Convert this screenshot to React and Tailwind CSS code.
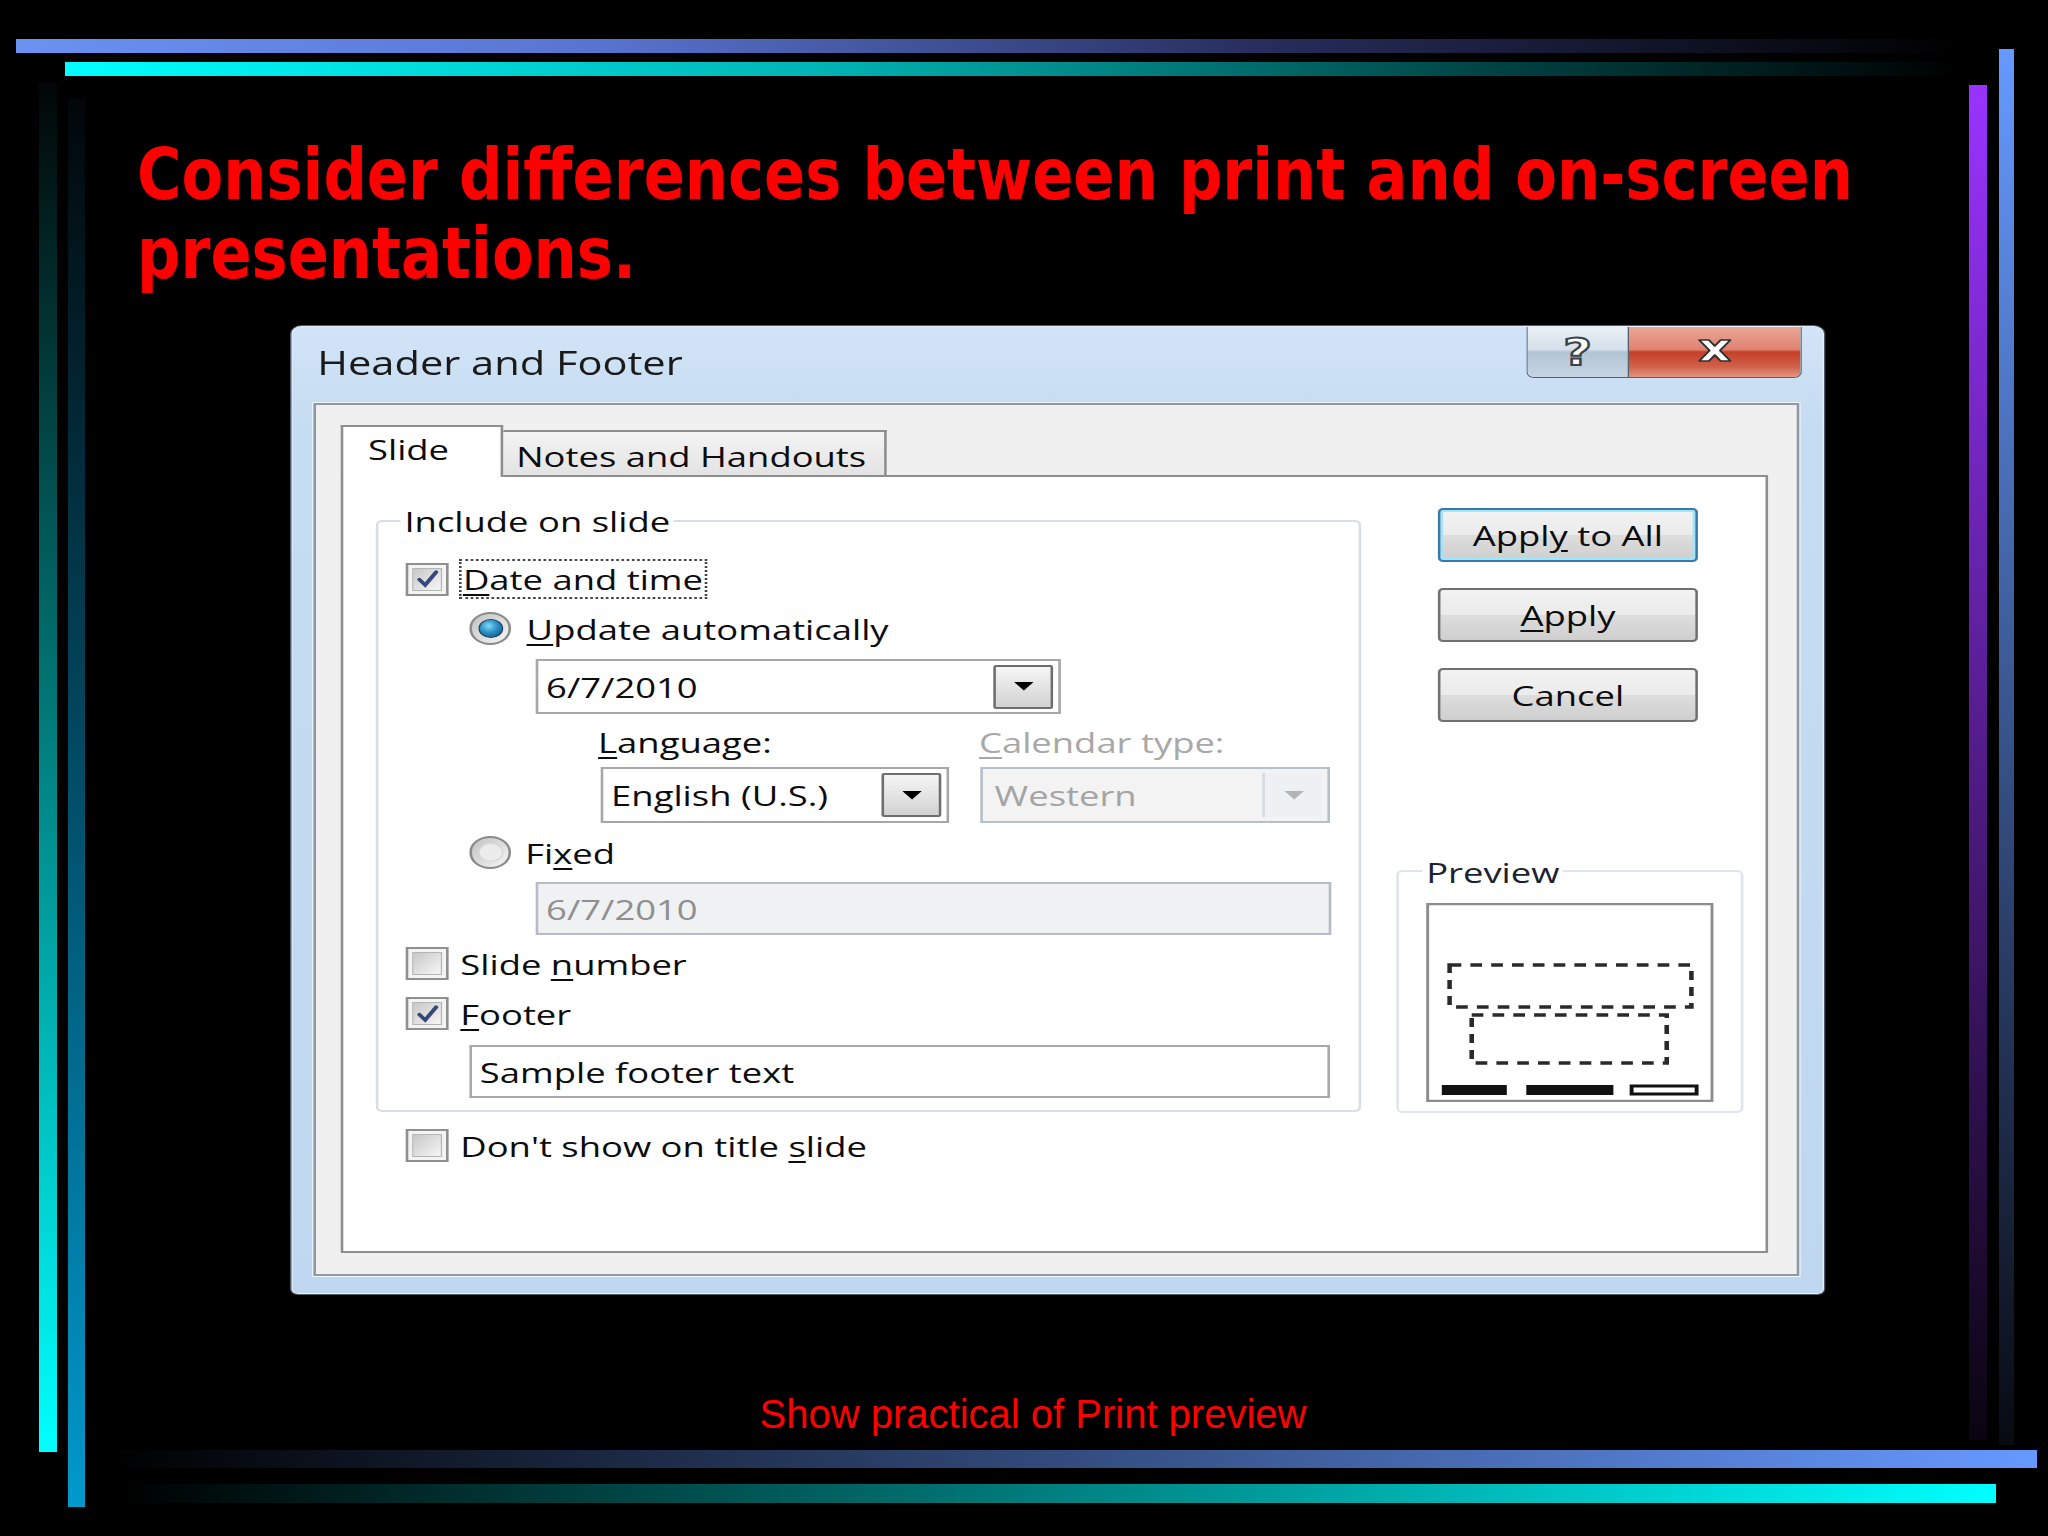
import React from 'react';

const ui = "font-['Open_Sans',sans-serif] text-[28px] leading-[34px]";

function Decor() {
  // slide template ornament: gradient strips round the edges
  return (
    <svg className="pointer-events-none absolute inset-0" width="2048" height="1536">
      <defs>
        <linearGradient id="top1" x1="0" y1="0" x2="1" y2="0">
          <stop offset="0" stopColor="#6a92f2" />
          <stop offset="0.3" stopColor="#5874d0" />
          <stop offset="0.65" stopColor="#262c5a" />
          <stop offset="1" stopColor="#000" />
        </linearGradient>
        <linearGradient id="top2" x1="0" y1="0" x2="1" y2="0">
          <stop offset="0" stopColor="#00ffff" />
          <stop offset="0.4" stopColor="#00b4b4" />
          <stop offset="0.75" stopColor="#004444" />
          <stop offset="1" stopColor="#000" />
        </linearGradient>
        <linearGradient id="rPurple" x1="0" y1="0" x2="0" y2="1">
          <stop offset="0" stopColor="#9933ff" />
          <stop offset="1" stopColor="#0a0410" />
        </linearGradient>
        <linearGradient id="rBlue" x1="0" y1="0" x2="0" y2="1">
          <stop offset="0" stopColor="#6699ff" />
          <stop offset="1" stopColor="#080a12" />
        </linearGradient>
        <linearGradient id="lCyan" x1="0" y1="0" x2="0" y2="1">
          <stop offset="0" stopColor="#020606" />
          <stop offset="1" stopColor="#00ffff" />
        </linearGradient>
        <linearGradient id="lBlue" x1="0" y1="0" x2="0" y2="1">
          <stop offset="0" stopColor="#020608" />
          <stop offset="1" stopColor="#0099cc" />
        </linearGradient>
        <linearGradient id="bBlue" x1="0" y1="0" x2="1" y2="0">
          <stop offset="0" stopColor="#000" />
          <stop offset="1" stopColor="#6699ff" />
        </linearGradient>
        <linearGradient id="bCyan" x1="0" y1="0" x2="1" y2="0">
          <stop offset="0" stopColor="#000" />
          <stop offset="1" stopColor="#00ffff" />
        </linearGradient>
      </defs>
      <rect x="16" y="39" width="1944" height="14" fill="url(#top1)" />
      <rect x="65" y="62" width="1895" height="14" fill="url(#top2)" />
      <rect x="1969" y="85" width="18" height="1355" fill="url(#rPurple)" />
      <rect x="1999" y="49" width="15" height="1396" fill="url(#rBlue)" />
      <rect x="39" y="83" width="18" height="1369" fill="url(#lCyan)" />
      <rect x="68" y="98" width="17" height="1409" fill="url(#lBlue)" />
      <rect x="111" y="1450" width="1926" height="18" fill="url(#bBlue)" />
      <rect x="118" y="1484" width="1878" height="19" fill="url(#bCyan)" />
    </svg>
  );
}

function Check({ checked }) {
  return (
    <div className="flex h-[33px] w-[33px] shrink-0 items-center justify-center border-2 border-[#8e8f8f] bg-[#f4f4f4] p-[3px]">
      <div className="flex h-full w-full items-center justify-center border border-[#b5b5b5] bg-linear-to-br from-[#c8c8c8] to-[#f6f6f6]">
        {checked && (
          <svg width="20" height="20" viewBox="0 0 20 20">
            <path d="M3.5 10.5 L8 16 L16.5 3" fill="none" stroke="#34497a" strokeWidth="3.2" strokeLinecap="round" />
          </svg>
        )}
      </div>
    </div>
  );
}

function Radio({ checked }) {
  return (
    <div className="flex h-[33px] w-[32px] shrink-0 items-center justify-center rounded-full border-2 border-[#8b8b8b] bg-linear-to-br from-[#c2c2c2] to-[#f6f6f6]">
      {checked ? (
        <div className="h-[19px] w-[19px] rounded-full border border-[#1e3f5a] bg-[radial-gradient(circle_at_40%_35%,#7fd8f8,#2a8fc6_45%,#0f4a75)]" />
      ) : (
        <div className="h-[19px] w-[19px] rounded-full border border-[#d6d6d6] bg-[#ececec]" />
      )}
    </div>
  );
}

function DropBtn({ disabled }) {
  if (disabled) {
    return (
      <div className="mr-[4px] flex h-[44px] w-[46px] items-center justify-center border-l-2 border-[#d5dbe1] bg-[#eef1f4]">
        <svg width="15" height="9" viewBox="0 0 15 9">
          <path d="M0 0 H15 L7.5 8.5 Z" fill="#b4b4b4" />
        </svg>
      </div>
    );
  }
  return (
    <div className="mr-[4px] flex h-[44px] w-[46px] items-center justify-center rounded-[2px] border-2 border-[#6e6e6e] bg-linear-to-b from-[#f6f6f6] to-[#d2d2d2]">
      <svg width="15" height="9" viewBox="0 0 15 9">
        <path d="M0 0 H15 L7.5 8.5 Z" fill="#000" />
      </svg>
    </div>
  );
}

function Button({ children, isDefault }) {
  return (
    <div
      className={
        isDefault
          ? 'flex h-[54px] w-[200px] items-center justify-center rounded-[4px] border-2 border-[#3a78a8] bg-[linear-gradient(to_bottom,#f2f2f2,#ebebeb_50%,#dddddd_51%,#cfcfcf)] shadow-[inset_0_0_0_2px_#9fe6fa]'
          : 'flex h-[54px] w-[200px] items-center justify-center rounded-[4px] border-2 border-[#707070] bg-[linear-gradient(to_bottom,#f2f2f2,#ebebeb_50%,#dddddd_51%,#cfcfcf)]'
      }
    >
      <span className="text-[#0c0c0c]">{children}</span>
    </div>
  );
}

function PreviewThumb() {
  return (
    <svg width="221" height="199" viewBox="0 0 221 199" className="ml-[21px] mt-[31px] block">
      <rect x="1" y="1" width="219" height="197" fill="#fff" stroke="#8c8c8c" strokeWidth="2.5" />
      <rect x="18" y="62" width="186" height="42" fill="none" stroke="#2a2a2a" strokeWidth="3.5" strokeDasharray="9 7" />
      <rect x="35" y="112" width="150" height="48" fill="none" stroke="#2a2a2a" strokeWidth="3.5" strokeDasharray="9 7" />
      <rect x="12" y="182" width="50" height="10" fill="#111" />
      <rect x="77" y="182" width="67" height="10" fill="#111" />
      <rect x="158" y="183" width="50" height="8" fill="#fff" stroke="#111" strokeWidth="3" />
    </svg>
  );
}

function TabStrip() {
  return (
    <div className="flex h-[50px] items-end">
      <div className="relative z-10 -mb-[2px] h-[52px] w-[125px] border-2 border-b-0 border-[#8e8e8e] bg-white pl-[19px] pt-[5px]">
        Slide
      </div>
      <div className="h-[45px] w-[295px] border-2 border-b-0 border-l-0 border-[#8e8e8e] bg-linear-to-b from-[#f4f4f4] to-[#e3e3e3] pl-[10px] pt-[7px]">
        Notes and Handouts
      </div>
    </div>
  );
}

function IncludeGroup() {
  return (
    <div className="relative rounded-[5px] border-2 border-[#d5dfe5] pb-[12px]">
      <span className="absolute -top-[18px] left-[17px] bg-white px-[3px]">Include on slide</span>

      <div className="ml-[21px] mt-[37px] flex h-[40px] items-center">
        <Check checked />
        <span className="ml-[8px] flex h-[40px] items-center border-2 border-dotted border-[#444] px-[1px]">
          <span>
            <u className="underline-offset-[4px]">D</u>ate and time
          </span>
        </span>
      </div>

      <div className="ml-[70px] mt-[13px] flex h-[33px] items-center">
        <Radio checked />
        <span className="ml-[12px]">
          <u className="underline-offset-[4px]">U</u>pdate automatically
        </span>
      </div>

      <div className="ml-[121px] mt-[14px] flex h-[55px] w-[404px] items-center border-2 border-[#a7a7a7] bg-white">
        <span className="flex-1 pl-[6px]">6/7/2010</span>
        <DropBtn />
      </div>

      <div className="ml-[169px] mt-[11px] flex h-[34px]">
        <span className="w-[293px]">
          <u className="underline-offset-[4px]">L</u>anguage:
        </span>
        <span className="text-[#a8a8a8]">
          <u className="underline-offset-[4px]">C</u>alendar type:
        </span>
      </div>

      <div className="ml-[171px] mt-[8px] flex gap-[24px]">
        <div className="flex h-[56px] w-[268px] items-center border-2 border-[#a7a7a7] bg-white">
          <span className="flex-1 pl-[6px]">English (U.S.)</span>
          <DropBtn />
        </div>
        <div className="flex h-[56px] w-[269px] items-center border-2 border-[#b6c0ca] bg-[#f3f3f3]">
          <span className="flex-1 pl-[9px] text-[#a4a4a4]">Western</span>
          <DropBtn disabled />
        </div>
      </div>

      <div className="ml-[70px] mt-[13px] flex h-[33px] items-center">
        <Radio />
        <span className="ml-[11px]">
          Fi<u className="underline-offset-[4px]">x</u>ed
        </span>
      </div>

      <div className="ml-[121px] mt-[13px] flex h-[53px] w-[612px] items-center border-2 border-[#b3bcc8] bg-[#f0f1f2]">
        <span className="pl-[6px] text-[#8f8f8f]">6/7/2010</span>
      </div>

      <div className="ml-[21px] mt-[12px] flex h-[33px] items-center">
        <Check />
        <span className="ml-[9px]">
          Slide <u className="underline-offset-[4px]">n</u>umber
        </span>
      </div>

      <div className="ml-[21px] mt-[17px] flex h-[33px] items-center">
        <Check checked />
        <span className="ml-[9px]">
          <u className="underline-offset-[4px]">F</u>ooter
        </span>
      </div>

      <div className="ml-[70px] mt-[15px] flex h-[53px] w-[662px] items-center border-2 border-[#a9a9a9] bg-white">
        <span className="pl-[6px]">Sample footer text</span>
      </div>
    </div>
  );
}

function Dialog() {
  return (
    <div className={`flex w-[1181px] origin-left scale-x-[1.3] flex-col rounded-t-[9px] rounded-b-[6px] border border-[#4f5b66] bg-[linear-gradient(to_bottom,#d2e4f7,#c6dcf2_10%,#bfd7f0)] shadow-[inset_0_0_0_1px_#e6f0fb] text-[#0c0c0c] ${ui}`}>
      {/* caption bar */}
      <div className="flex h-[77px] items-start">
        <div className="ml-[20px] mt-[18px] flex-1 text-[32px] leading-[37px] text-[#1a1a1a]">Header and Footer</div>
        <div className="mr-[17px] mt-[1px] flex h-[51px] overflow-hidden rounded-b-[6px] border border-t-0 border-[#56606b]">
          <div className="flex w-[78px] items-center justify-center border-r border-[#56606b] bg-[linear-gradient(to_bottom,#eaf0f6,#d5e0eb_45%,#b3c4d5_50%,#c6d4e2)]">
            <span className="font-['DejaVu_Sans',sans-serif] text-[38px] font-bold leading-none text-white [-webkit-text-stroke:2px_#3b434c]">?</span>
          </div>
          <div className="flex w-[132px] items-center justify-center bg-[linear-gradient(to_bottom,#eba898,#df8270_45%,#c43f27_50%,#d2624b_80%,#e29683)] pb-[4px]">
            <svg width="28" height="25" viewBox="0 0 28 25">
              <path
                d="M2 2 H9.5 L14 8 L18.5 2 H26 L18 12.5 L26 23 H18.5 L14 17 L9.5 23 H2 L10 12.5 Z"
                fill="#fff"
                stroke="#2f2f2f"
                strokeWidth="1.6"
                strokeLinejoin="round"
              />
            </svg>
          </div>
        </div>
      </div>

      {/* client area */}
      <div className="mb-[18px] ml-[17px] mr-[19px] flex h-[873px] flex-col border-2 border-[#8e99a3] bg-[#f0f0f0] pb-[21px] pl-[19px] pr-[22px] pt-[20px] shadow-[0_0_0_1px_#eef5fc]">
        <TabStrip />
        <div className="flex flex-1 items-start border-2 border-[#8e8e8e] bg-white pl-[25px]">
          <div className="mt-[43px] w-[758px]">
            <IncludeGroup />
            <div className="ml-[23px] mt-[17px] flex h-[33px] items-center">
              <Check />
              <span className="ml-[9px]">
                Don't show on title <u className="underline-offset-[4px]">s</u>lide
              </span>
            </div>
          </div>

          <div className="ml-[27px] mt-[31px] flex w-[267px] flex-col">
            <div className="ml-[32px] flex flex-col gap-[26px]">
              <Button isDefault>
                Appl<u className="underline-offset-[4px]">y</u> to All
              </Button>
              <Button>
                <u className="underline-offset-[4px]">A</u>pply
              </Button>
              <Button>Cancel</Button>
            </div>
            <div className="relative mt-[148px] h-[243px] rounded-[5px] border-2 border-[#dfe5ea]">
              <span className="absolute -top-[17px] left-[18px] bg-white px-[3px] text-[#1d2230]">Preview</span>
              <PreviewThumb />
            </div>
          </div>
        </div>
      </div>
    </div>
  );
}

export default function App() {
  return (
    <div className="relative h-[1536px] w-[2048px] overflow-hidden bg-black">
      <Decor />
      <div className="relative flex flex-col">
        <h1 className="ml-[137px] mt-[135px] w-max origin-left scale-x-[0.855] whitespace-nowrap font-['DejaVu_Sans',sans-serif] text-[71px] font-bold leading-[79px] text-[#ff0000]">
          Consider differences between print and on-screen
          <br />
          presentations.
        </h1>
        <div className="ml-[290px] mt-[32px]">
          <Dialog />
        </div>
        <p className="mt-[96px] pl-[18px] text-center font-['Liberation_Sans',Arial,sans-serif] text-[40px] leading-[46px] text-[#ff0000]">
          Show practical of Print preview
        </p>
      </div>
    </div>
  );
}
